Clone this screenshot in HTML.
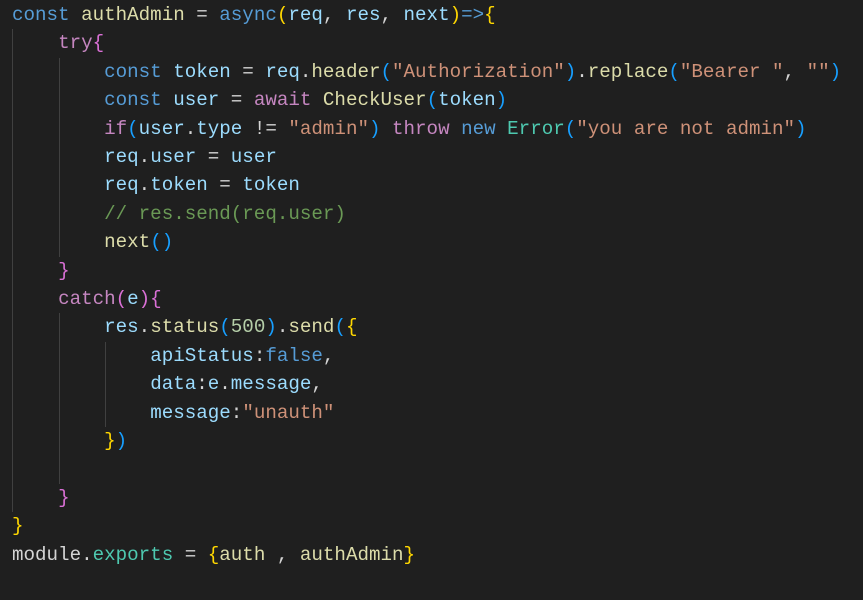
<!DOCTYPE html>
<html><head><style>
html,body{margin:0;padding:0;background:#1f1f1f;width:863px;height:600px;overflow:hidden}
pre{margin:0;position:absolute;left:12px;top:1px;font-family:"Liberation Mono",monospace;font-size:19.2px;line-height:28.4px;color:#d4d4d4}
.k{color:#569cd6}.v{color:#9cdcfe}.f{color:#dcdcaa}.s{color:#ce9178}.c{color:#c586c0}.m{color:#6a9955}
.g{color:#ffd700}.p{color:#da70d6}.b{color:#179fff}.n{color:#b5cea8}.t{color:#4ec9b0}.w{color:#d4d4d4}
.guide{position:absolute;width:1px;background:#404040}
</style></head><body>
<div class="guide" style="left:12px;top:29px;height:483px"></div>
<div class="guide" style="left:59px;top:58px;height:199px"></div>
<div class="guide" style="left:59px;top:313px;height:171px"></div>
<div class="guide" style="left:105px;top:342px;height:85px"></div>
<pre><span class="k">const</span> <span class="f">authAdmin</span> = <span class="k">async</span><span class="g">(</span><span class="v">req</span>, <span class="v">res</span>, <span class="v">next</span><span class="g">)</span><span class="k">=&gt;</span><span class="g">{</span>
    <span class="c">try</span><span class="p">{</span>
        <span class="k">const</span> <span class="v">token</span> = <span class="v">req</span>.<span class="f">header</span><span class="b">(</span><span class="s">"Authorization"</span><span class="b">)</span>.<span class="f">replace</span><span class="b">(</span><span class="s">"Bearer "</span>, <span class="s">""</span><span class="b">)</span>
        <span class="k">const</span> <span class="v">user</span> = <span class="c">await</span> <span class="f">CheckUser</span><span class="b">(</span><span class="v">token</span><span class="b">)</span>
        <span class="c">if</span><span class="b">(</span><span class="v">user</span>.<span class="v">type</span> != <span class="s">"admin"</span><span class="b">)</span> <span class="c">throw</span> <span class="k">new</span> <span class="t">Error</span><span class="b">(</span><span class="s">"you are not admin"</span><span class="b">)</span>
        <span class="v">req</span>.<span class="v">user</span> = <span class="v">user</span>
        <span class="v">req</span>.<span class="v">token</span> = <span class="v">token</span>
        <span class="m">// res.send(req.user)</span>
        <span class="f">next</span><span class="b">()</span>
    <span class="p">}</span>
    <span class="c">catch</span><span class="p">(</span><span class="v">e</span><span class="p">){</span>
        <span class="v">res</span>.<span class="f">status</span><span class="b">(</span><span class="n">500</span><span class="b">)</span>.<span class="f">send</span><span class="b">(</span><span class="g">{</span>
            <span class="v">apiStatus</span>:<span class="k">false</span>,
            <span class="v">data</span>:<span class="v">e</span>.<span class="v">message</span>,
            <span class="v">message</span>:<span class="s">"unauth"</span>
        <span class="g">}</span><span class="b">)</span>

    <span class="p">}</span>
<span class="g">}</span>
<span class="w">module</span>.<span class="t">exports</span> = <span class="g">{</span><span class="f">auth</span> , <span class="f">authAdmin</span><span class="g">}</span>
</pre>
</body></html>
